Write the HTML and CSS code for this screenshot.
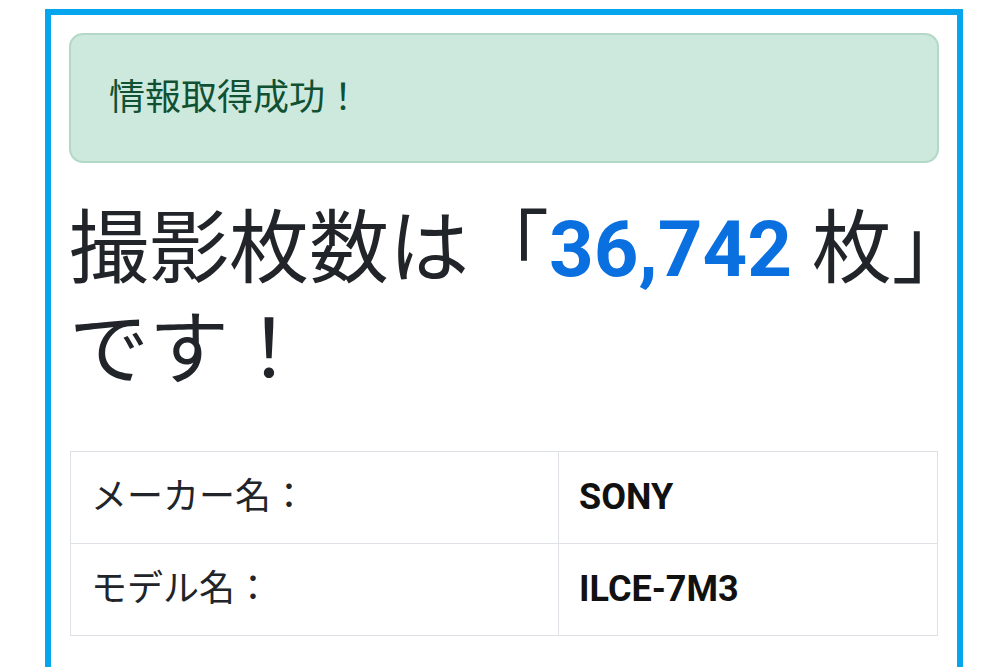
FILE: index.html
```html
<!DOCTYPE html>
<html lang="ja">
<head>
<meta charset="utf-8">
<title>撮影枚数</title>
<link rel="stylesheet" href="styles.css">
</head>
<body>
<div class="frame">
  <div class="alert">情報取得成功！</div>
  <h1 class="count"><span class="keep">撮影枚数は「<span class="num">36,742</span> 枚<span class="close">」</span></span>です！</h1>
  <table class="info">
    <tr><td class="label">メーカー名：</td><td class="value">SONY</td></tr>
    <tr><td class="label">モデル名：</td><td class="value">ILCE-7M3</td></tr>
  </table>
</div>
</body>
</html>
```
FILE: styles.css
```css
html, body {
  margin: 0;
  padding: 0;
  background: #fff;
  height: 100%;
  overflow: hidden;
}
body {
  font-family: Roboto, "Noto Sans CJK JP", sans-serif;
  color: #212529;
}
.frame {
  margin: 9px 0 0 45px;
  width: 918px;
  box-sizing: border-box;
  min-height: 700px;
  border: 6px solid #06a6ee;
  border-bottom: none;
  padding: 18px;
}
.alert {
  box-sizing: border-box;
  border: 2px solid #b3d9c6;
  border-radius: 14px;
  background: #cde8dd;
  color: #0f5132;
  padding: 36px 38px;
  font-size: 36px;
  line-height: 54px;
  margin-bottom: 36px;
}
.count {
  font-size: 80px;
  line-height: 100px;
  font-weight: 400;
  margin: 2px 0 51px 0;
  color: #212529;
}
.keep {
  white-space: nowrap;
}
.close {
  letter-spacing: -0.5em;
}
.num {
  color: #0a70e0;
  font-weight: 700;
  font-size: 78px;
}
.info {
  width: 868px;
  border-collapse: collapse;
  border: 1px solid #dee2e6;
  margin-left: 1px;
}
.info td {
  border: 1px solid #dee2e6;
  padding: 18px 20px;
  font-size: 36px;
  line-height: 55px;
}
.label {
  width: 447px;
  color: #212529;
}
.value {
  font-weight: 700;
  color: #111;
}
```
